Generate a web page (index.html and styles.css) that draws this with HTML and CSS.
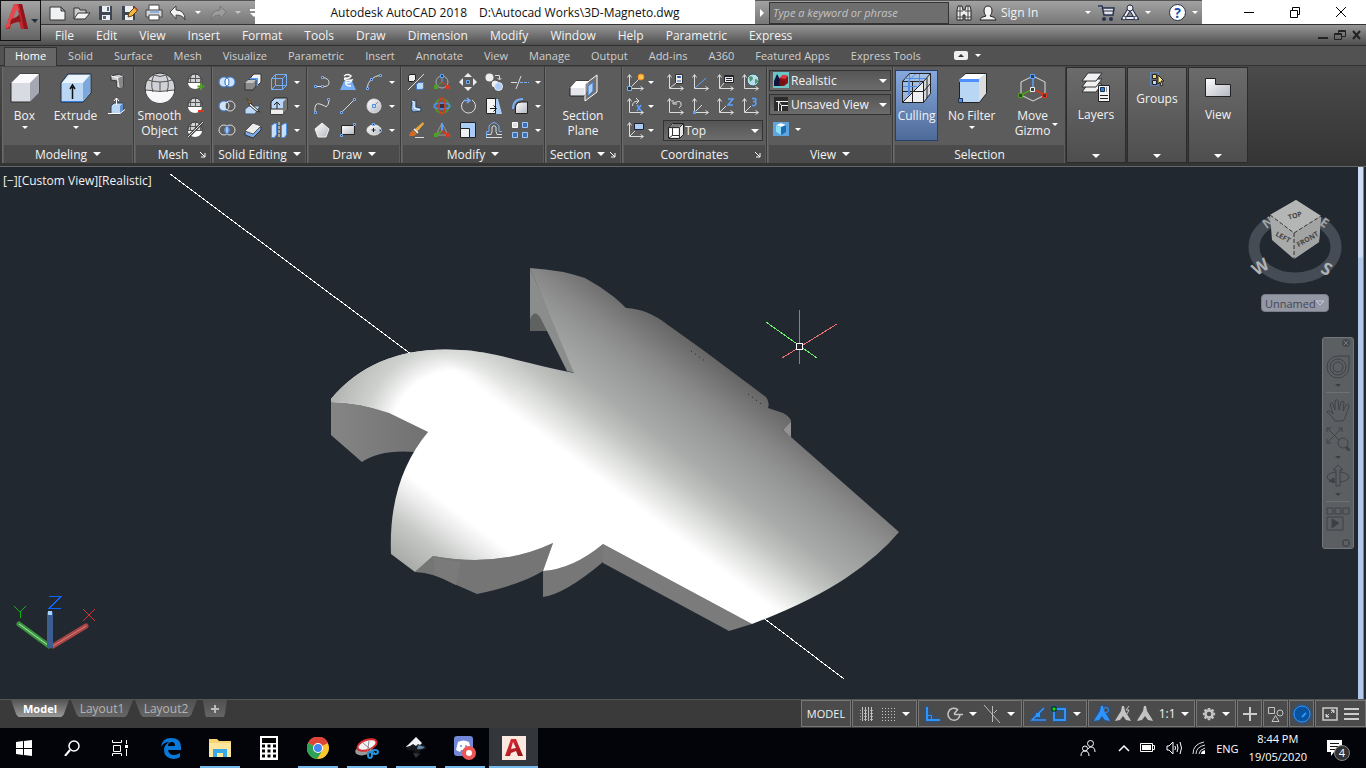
FILE: index.html
```html
<!DOCTYPE html>
<html lang="en">
<head>
  <meta charset="UTF-8" />
  <meta name="viewport" content="width=device-width, initial-scale=1.0" />
  <title>Autodesk AutoCAD 2018</title>
  <link rel="stylesheet" href="styles.css">
</head>
<body>
  <!-- shared icon parts -->
  <svg class="defs" width="0" height="0" aria-hidden="true">
    <defs>
      <linearGradient id="metal" x1="0" y1="0" x2="1" y2="1"><stop offset="0" stop-color="#fff"/><stop offset="1" stop-color="#b4b7c0"/></linearGradient>
      <linearGradient id="red" x1="0" y1="0" x2="1" y2="1"><stop offset="0" stop-color="#e8323a"/><stop offset="1" stop-color="#8f1016"/></linearGradient>
      <symbol id="axis" viewBox="0 0 18 18"><path d="M2.500 2v13.500H16M.5 4.500l2-3 2 3M13.500 13.500l3 2-3 2" fill="none" stroke="#dcdcdc"/></symbol>
      <symbol id="globe" viewBox="0 0 18 18"><circle cx="8" cy="8" r="7" fill="#d0d2d6" stroke="#333"/><path d="M1 9h14v1a7 6 0 0 1-14 0z" fill="#fff"/><path d="M1 9.500h14M2 5.500h12M8.500 1v8M4.500 2q-2 3-1 7M12.500 2q2 3 1 7" fill="none" stroke="#555"/></symbol>
      <symbol id="cube" viewBox="0 0 32 32"><path d="M2 11l9-9h19v19l-9 9H2z" fill="#d9dbe2" stroke="#2e2e2e"/><path d="M2 11l9-9h19l-9 9z" fill="#fafafc"/><path d="M21 11l9-9v19l-9 9z" fill="#a5a8b2"/></symbol>
      <symbol id="person" viewBox="0 0 16 16"><path d="M7 0h2l1 5 5 8 1 2-5-1-3-4-3 4-5 1 1-2 5-8z"/></symbol>
    </defs>
  </svg>

  <div class="app">
    <header class="titlebar">
      <button class="app-menu" aria-label="Application menu">
        <svg width="39" height="39" viewBox="0 0 39 39"><path d="M4 28L13 3h8l6 25h-7l-2-7-8 2-1 5z" fill="#c4262d"/><path d="M4 28L13 3h3l2 6-8 10-1 6z" fill="#e5484d"/><path d="M10 19q6-2 8-6l2 8q-5-2-11 3zM18 3h3l6 25h-4z" fill="#8d171c"/><path d="M12 17l4-9 2 5q-1 3-6 4z" fill="#8c8c8c"/><path d="M30 18h7l-3 4z" fill="#26313c"/></svg>
      </button>
      <div class="quick-access">
        <button aria-label="New"><svg width="18" height="18" viewBox="0 0 18 18"><path d="M1 3h11l4 4v9H1z" fill="#f1f2f4" stroke="#333"/><path d="M12 3v4h4z" fill="#aaa" stroke="#333"/></svg></button>
        <button aria-label="Open"><svg width="18" height="18" viewBox="0 0 18 18"><path d="M1 15V4h5l1 2h6v3" fill="#ccc" stroke="#333"/><path d="M1 15l4-6h12l-5 6z" fill="#f3f3f3" stroke="#333"/></svg></button>
        <button aria-label="Save"><svg width="18" height="18" viewBox="0 0 18 18"><path d="M2 2h13v14H2z" fill="#3c4553"/><path d="M5 2h8v6H5zM5 11h8v5H5z" fill="#eceef0"/><path d="M10 3h2v4h-2zM6 12h3v3H6z" fill="#56657a"/></svg></button>
        <button aria-label="Save As"><svg width="18" height="18" viewBox="0 0 18 18"><path d="M1 2h13v14H1z" fill="#3c4553"/><path d="M4 2h8v6H4zM4 11h8v5H4z" fill="#eceef0"/><path d="M7 13l1-4 6-6 3 3-6 6z" fill="#f4b63c" stroke="#5d4216"/><path d="M14 3l3 3-1 1-3-3z" fill="#c54a2c"/></svg></button>
        <button aria-label="Plot"><svg width="18" height="18" viewBox="0 0 18 18"><path d="M4 1h10v6H4z" fill="#fff" stroke="#444"/><path d="M1 6h16v7H1z" fill="#d3d5da" stroke="#444"/><path d="M4 11h10v5H4z" fill="#fff" stroke="#444"/><path d="M5 8h9" stroke="#4d8fe0"/></svg></button>
        <button aria-label="Undo"><svg width="18" height="18" viewBox="0 0 18 18"><path d="M1 8l6-6v4q9 0 9 10-2-5-9-5v4z" fill="#f4f4f4" stroke="#444"/></svg></button>
        <i class="caret small"></i>
        <button aria-label="Redo"><svg width="18" height="18" viewBox="0 0 18 18"><path d="M17 8l-6-6v4q-9 0-9 10 2-5 9-5v4z" fill="#9c9c9c" stroke="#777"/></svg></button>
        <i class="caret small dim"></i>
        <button class="more" aria-label="Customize"><svg width="10" height="10" viewBox="0 0 10 10"><path d="M1 1h8v2H1zM1 5h8L5 9z" fill="#fff"/></svg></button>
      </div>
      <h1 class="title"><span>Autodesk AutoCAD 2018</span><span>D:\Autocad Works\3D-Magneto.dwg</span></h1>
      <div class="info-center">
        <button class="expander" aria-label="Toggle search"><i class="caret side"></i></button>
        <input type="text" placeholder="Type a keyword or phrase" aria-label="Search">
        <button aria-label="Find"><svg width="18" height="18" viewBox="0 0 18 18"><path d="M2 6l1-4h4l1 4h2l1-4h4l1 4v10h-6v-5H8v5H2z" fill="#eee" stroke="#222"/><path d="M2 7h6M10 7h6M2 13h6M10 13h6M5 2v14M13 2v14" stroke="#444"/></svg></button>
        <button class="sign-in"><svg width="18" height="18" viewBox="0 0 18 18"><path d="M1 16q0-3 6-4-2-2-2-5 0-5 4-5t4 5q0 3-2 5 6 1 6 4z" fill="#f4f4f4" stroke="#222"/></svg>Sign In</button>
        <i class="caret small"></i>
        <button aria-label="App Store"><svg width="18" height="18" viewBox="0 0 18 18"><path d="M1 2h4l2 9h9l1-7H5" fill="#e4e4e8" stroke="#26304e" stroke-width="1.500"/><path d="M6 7h10" stroke="#26304e"/><circle cx="7" cy="15" r="2" fill="#26304e"/><circle cx="14" cy="15" r="2" fill="#26304e"/></svg></button>
        <button aria-label="Stay connected"><svg width="18" height="18" viewBox="0 0 18 18"><path d="M9 4L3 14h12z" fill="none" stroke="#26304e" stroke-width="4"/><path d="M9 4L3 14h12z" fill="none" stroke="#eee" stroke-width="2"/><g fill="#eee" stroke="#26304e"><circle cx="9" cy="4" r="3"/><circle cx="3" cy="14" r="2"/><circle cx="15" cy="14" r="2"/></g></svg></button>
        <i class="caret small"></i>
        <button class="help" aria-label="Help">?</button>
        <i class="caret small"></i>
      </div>
      <div class="window-buttons">
        <button aria-label="Minimize"><svg width="11" height="11" viewBox="0 0 11 11"><path d="M0 5h10v1H0z"/></svg></button>
        <button aria-label="Restore"><svg width="11" height="11" viewBox="0 0 11 11"><path d="M.5 3.500h7v7h-7zM2.500 3V.5h7v7H8" fill="none" stroke="#000"/></svg></button>
        <button aria-label="Close"><svg width="11" height="11" viewBox="0 0 11 11"><path d="M0 0l10 10M10 0L0 10" stroke="#000"/></svg></button>
      </div>
    </header>

    <nav class="menubar">
      <a href="#">File</a><a href="#">Edit</a><a href="#">View</a><a href="#">Insert</a><a href="#">Format</a><a href="#">Tools</a><a href="#">Draw</a><a href="#">Dimension</a><a href="#">Modify</a><a href="#">Window</a><a href="#">Help</a><a href="#">Parametric</a><a href="#">Express</a>
      <div class="doc-buttons">
        <button aria-label="Minimize drawing"><svg width="12" height="12" viewBox="0 0 12 12"><path d="M1 8h10v2H1z" fill="#222"/></svg></button>
        <button aria-label="Restore drawing"><svg width="12" height="12" viewBox="0 0 12 12"><path d="M.5 4.500h7v6h-7zM1 5.500h6M4.500 4V1.500h7v6H8M5 2.500h6" fill="none" stroke="#222"/></svg></button>
        <button aria-label="Close drawing"><svg width="12" height="12" viewBox="0 0 12 12"><path d="M2 2l7 8M9 2l-7 8" stroke="#222" stroke-width="2"/></svg></button>
      </div>
    </nav>

    <nav class="tabs">
      <a href="#" class="active">Home</a><a href="#">Solid</a><a href="#">Surface</a><a href="#">Mesh</a><a href="#">Visualize</a><a href="#">Parametric</a><a href="#">Insert</a><a href="#">Annotate</a><a href="#">View</a><a href="#">Manage</a><a href="#">Output</a><a href="#">Add-ins</a><a href="#">A360</a><a href="#">Featured Apps</a><a href="#">Express Tools</a>
      <button class="ribbon-toggle" aria-label="Minimize ribbon"><svg width="14" height="9" viewBox="0 0 14 9"><rect width="14" height="9" rx="2" fill="#eee"/><path d="M4 6h6L7 3z" fill="#333"/></svg></button>
      <i class="caret small"></i>
    </nav>

    <div class="ribbon">
      <section class="panel modeling">
        <div class="tools">
          <button class="big"><svg width="32" height="32"><use href="#cube"/></svg>Box<i class="caret small"></i></button>
          <button class="big"><svg width="32" height="32" viewBox="0 0 32 32"><path d="M1 11l7-9h23v19l-8 9H1z" fill="#b9d6f4" stroke="#222d3c"/><path d="M2 11l7-8h21l-7 8z" fill="#eaf4fd"/><path d="M23 11l7-8v18l-7 8z" fill="#7ba9dd"/><path d="M12.500 27V15M10 17l2.500-4 2.500 4" fill="none" stroke="#111" stroke-width="1.500"/><path d="M2 29.500h21" stroke="#2f7de0"/></svg>Extrude<i class="caret small"></i></button>
          <div class="grid">
            <button aria-label="Polysolid"><svg width="18" height="18" viewBox="0 0 18 18"><path d="M3 3l8-2 4 2v11l-3 2-3-2V8L3 7z" fill="#c4c6ca" stroke="#333"/><path d="M3 3l7 2v9M10 5l5-2" fill="none" stroke="#fff"/><path d="M10 5l5-2v11l-3 2z" fill="#888"/></svg></button>
            <button aria-label="Presspull"><svg width="18" height="18" viewBox="0 0 18 18"><path d="M3 9l3-3h9v8l-3 3H3z" fill="#b9d6f4" stroke="#345"/><path d="M12 9l3-3v8l-3 3z" fill="#5f8fce"/><path d="M8.500 8V1M6 4l2.500-3L11 4M0 16.500h12l5-4" fill="none" stroke="#fff"/></svg></button>
          </div>
        </div>
        <h2>Modeling <i class="caret"></i></h2>
      </section>

      <section class="panel mesh">
        <div class="tools">
          <button class="big"><svg width="32" height="32" viewBox="0 0 32 32"><circle cx="16" cy="16" r="15" fill="#d0d2d7" stroke="#333"/><path d="M2 18q14 3 28 0a14 13 0 0 1-28 0z" fill="#f7f7f9"/><path d="M2 18q14 3 28 0M4 8q12 4 24 0M10 3q-4 8-1 17M22 3q4 8 1 17M16 10v10M10 3q6 3 12 0" fill="none" stroke="#555"/></svg>Smooth<br>Object</button>
          <div class="grid">
            <button aria-label="Smooth more"><svg width="18" height="18" viewBox="0 0 18 18"><use href="#globe"/><path d="M14 10v7M10.500 13.500h7" stroke="#4da020" stroke-width="2"/></svg></button>
            <button aria-label="Smooth less"><svg width="18" height="18" viewBox="0 0 18 18"><use href="#globe"/><path d="M11 14h6" stroke="#e0341c" stroke-width="2"/></svg></button>
            <button aria-label="Refine mesh"><svg width="18" height="18" viewBox="0 0 18 18"><use href="#globe"/><path d="M1 16L16 1" stroke="#444" stroke-width="3"/><path d="M1 16L16 1" stroke="#ddd"/></svg></button>
          </div>
        </div>
        <h2>Mesh<svg class="launcher" width="6" height="6" viewBox="0 0 6 6"><path d="M0 0l5 5M5 1v4H1" fill="none" stroke="#fff"/></svg></h2>
      </section>

      <section class="panel solid">
        <div class="tools">
          <div class="grid cols-3">
            <button aria-label="Union"><svg width="18" height="18" viewBox="0 0 18 18"><circle cx="6" cy="9" r="5" fill="#cfe2f8" stroke="#3b7bd0"/><circle cx="12" cy="9" r="5" fill="#cfe2f8" stroke="#3b7bd0"/><ellipse cx="9" cy="9" rx="2" ry="4" fill="#fff" stroke="#3b7bd0"/></svg></button>
            <button aria-label="Extrude faces"><svg width="18" height="18" viewBox="0 0 18 18"><path d="M7 4l3-3h7v8l-3 3H7z" fill="#f2f2f4" stroke="#333"/><path d="M6 6h7v7" fill="none" stroke="#5ba0ff" stroke-width="2"/><path d="M1 10l3-3h8v6l-3 4H1z" fill="#8a8a8a" stroke="#333"/><path d="M1 10l3-3h8l-3 3z" fill="#c4c4c4"/></svg></button>
            <button aria-label="Extract edges"><svg width="18" height="18" viewBox="0 0 18 18"><path d="M1.500 5.500h11v11h-11zM5.500 1.500h11v11h-11zM1.500 5.500l4-4M12.500 5.500l4-4M12.500 16.500l4-4M1.500 16.500l4-4" fill="none" stroke="#76aff8"/></svg></button><i class="caret small"></i>
            <button aria-label="Subtract"><svg width="18" height="18" viewBox="0 0 18 18"><circle cx="12" cy="9" r="5" fill="none" stroke="#ddd"/><circle cx="6" cy="9" r="5" fill="#cfe2f8" stroke="#3b7bd0"/><path d="M9 5a5 5 0 0 0 0 8 5 5 0 0 0 0-8" fill="#555" stroke="#ddd"/></svg></button>
            <button aria-label="Slice"><svg width="18" height="18" viewBox="0 0 18 18"><path d="M1 12l4-3h11l-5 8H1z" fill="#bcd8f5" stroke="#456"/><path d="M2 1l6 5-2 2z" fill="#b8752c" stroke="#543"/><path d="M6 6l10 9-4-1-7-6z" fill="#eee" stroke="#333"/></svg></button>
            <button aria-label="Fillet edge"><svg width="18" height="18" viewBox="0 0 18 18"><path d="M1 5l4-4h12v12l-4 4H1z" fill="#b9d6f4" stroke="#222"/><path d="M1 12h12v5H1z" fill="#eee"/><path d="M13 5l4-4v12l-4 4z" fill="#777"/><path d="M7 12V6M4 8l3-3 3 3M1 12h12" fill="none" stroke="#222"/></svg></button><i class="caret small"></i>
            <button aria-label="Intersect"><svg width="18" height="18" viewBox="0 0 18 18"><circle cx="6" cy="9" r="5" fill="none" stroke="#ddd"/><circle cx="12" cy="9" r="5" fill="none" stroke="#ddd"/><ellipse cx="9" cy="9" rx="2" ry="4" fill="#9cc6f8" stroke="#3b7bd0"/></svg></button>
            <button aria-label="Thicken"><svg width="18" height="18" viewBox="0 0 18 18"><path d="M1 11l8-8 8 3v3l-8 8-8-3z" fill="#78abea" stroke="#333"/><path d="M1 10l8-8 8 3-8 8z" fill="#eee" stroke="#555"/></svg></button>
            <button aria-label="Separate"><svg width="18" height="18" viewBox="0 0 18 18"><path d="M1.500 4.500l3-2h2v11l-2 3h-3zM11.500 4.500l3-2h2v11l-2 3h-3z" fill="#c8dffa" stroke="#4c8de0"/><path d="M9 1v16" stroke="#eee" stroke-dasharray="3 1"/></svg></button><i class="caret small"></i>
          </div>
        </div>
        <h2>Solid Editing <i class="caret"></i></h2>
      </section>

      <section class="panel draw">
        <div class="tools">
          <div class="grid cols-3">
            <button aria-label="Polyline"><svg width="18" height="18" viewBox="0 0 18 18"><path d="M2 13.500h9q5 0 5-4t-6-5" fill="none" stroke="#ddd"/><path d="M1.500 12.500h2v2h-2zM8.500 12.500h2v2h-2zM8.500 3.500h2v2h-2z" fill="#234" stroke="#76aff8"/></svg></button>
            <button aria-label="Helix"><svg width="18" height="18" viewBox="0 0 18 18"><path d="M5 8h8l4 9H1z" fill="#76aff8"/><path d="M5 3q4-3 7 0-2 3-6 2-2 3 7 2-2 4-6 2-1 4 5 4" fill="none" stroke="#fff" stroke-width="1.500"/></svg></button>
            <button aria-label="Arc"><svg width="18" height="18" viewBox="0 0 18 18"><path d="M2 16Q3 4 16 2" fill="none" stroke="#ddd"/><path d="M1.500 14.500h2v2h-2zM5.500 5.500h2v2h-2zM14.500 1.500h2v2h-2z" fill="#234" stroke="#76aff8"/></svg></button><i class="caret small"></i>
            <button aria-label="Spline"><svg width="18" height="18" viewBox="0 0 18 18"><path d="M2 15Q1 5 7 7t6 3q3-2 3-7" fill="none" stroke="#ddd"/><path d="M1.500 14.500h2v2h-2zM14.500 1.500h2v2h-2z" fill="#234" stroke="#76aff8"/></svg></button>
            <button aria-label="Line"><svg width="18" height="18" viewBox="0 0 18 18"><path d="M2 16L16 2" stroke="#ddd"/><path d="M1.500 14.500h2v2h-2zM14.500 1.500h2v2h-2z" fill="#234" stroke="#76aff8"/></svg></button>
            <button aria-label="Circle"><svg width="18" height="18" viewBox="0 0 18 18"><circle cx="9" cy="9" r="7" fill="url(#metal)" stroke="#ddd"/><path d="M9 9l4-4" stroke="#888"/><path d="M7.500 7.500h3v3h-3z" fill="#cde" stroke="#4d8fe8"/></svg></button><i class="caret small"></i>
            <button aria-label="Polygon"><svg width="18" height="18" viewBox="0 0 18 18"><path d="M9 2l7 6-3 8H5L2 8z" fill="url(#metal)" stroke="#eee"/></svg></button>
            <button aria-label="Rectangle"><svg width="18" height="18" viewBox="0 0 18 18"><path d="M2.500 4.500h13v9h-13z" fill="url(#metal)" stroke="#222"/><path d="M1.500 13.500h2v2h-2zM14.500 2.500h2v2h-2z" fill="#234" stroke="#76aff8"/></svg></button>
            <button aria-label="Ellipse"><svg width="18" height="18" viewBox="0 0 18 18"><ellipse cx="9" cy="9" rx="7" ry="5" fill="url(#metal)" stroke="#eee"/><path d="M8.500 7v4M6.500 9h4" stroke="#222"/><path d="M7.500 2.500h2v2h-2zM14.500 8.500h2v2h-2z" fill="#234" stroke="#76aff8"/></svg></button><i class="caret small"></i>
          </div>
        </div>
        <h2>Draw <i class="caret"></i></h2>
      </section>

      <section class="panel modify">
        <div class="tools">
          <div class="grid cols-5">
            <button aria-label="3D Align"><svg width="18" height="18" viewBox="0 0 18 18"><path d="M1.500 3.500l1-2h6v5l-2 2h-5z" fill="#eee" stroke="#222"/><path d="M1 17L17 1" stroke="#ddd"/><path d="M9.500 11.500l2-2h5v5l-1 2h-6z" fill="#b9d6f4" stroke="#3b7bd0"/></svg></button>
            <button aria-label="3D Move"><svg width="18" height="18" viewBox="0 0 18 18"><circle cx="9" cy="9" r="6" fill="none" stroke="#aaa"/><path d="M9 9V2" stroke="#5ba0ff"/><path d="M9 9l-6 5" stroke="#4da020"/><path d="M9 9l6 5" stroke="#e0341c"/><path d="M7.500 1.500h3v3h-3z" fill="#245" stroke="#5ba0ff"/><path d="M1 12h4v4H1z" fill="#4da020"/><path d="M13 12h4v4h-4z" fill="#e0341c"/></svg></button>
            <button aria-label="Move"><svg width="18" height="18" viewBox="0 0 18 18"><path d="M9 0l4 4H5zM9 18l4-4H5zM0 9l4-4v8zM18 9l-4-4v8z" fill="#eee"/><path d="M7.500 7.500h3v3h-3z" fill="#345" stroke="#76aff8"/></svg></button>
            <button aria-label="Copy"><svg width="18" height="18" viewBox="0 0 18 18"><circle cx="4.500" cy="4.500" r="4" fill="#eee"/><circle cx="10" cy="11" r="4" fill="#eee" stroke="#555"/><circle cx="13.500" cy="13.500" r="4" fill="#a9cdf6" stroke="#eee"/><path d="M10 2.500h4.500v4M12.500 5l2 2 2-2" fill="none" stroke="#ddd"/></svg></button>
            <button aria-label="Trim"><svg width="18" height="18" viewBox="0 0 18 18"><path d="M0 9.500h6" stroke="#ddd"/><path d="M9 9.500h9" stroke="#76aff8" stroke-dasharray="3 1"/><path d="M10 3L5 16" stroke="#ddd"/></svg></button><i class="caret small"></i>
            <button aria-label="Extract"><svg width="18" height="18" viewBox="0 0 18 18"><path d="M5 4l4-1v7l5 1v3l-8 1-2-3z" fill="#8fb6e4" stroke="#345"/><path d="M5 4l2 1v6l6 2" fill="none" stroke="#fff"/></svg></button>
            <button aria-label="3D Rotate"><svg width="18" height="18" viewBox="0 0 18 18"><g fill="none" stroke-width="1.500"><circle cx="9" cy="9" r="7" stroke="#4da020"/><ellipse cx="9" cy="9" rx="8" ry="3" stroke="#4d8fe8"/><ellipse cx="9" cy="9" rx="3" ry="8" stroke="#d83a20"/></g><path d="M7 7h4v4H7z" fill="#334"/></svg></button>
            <button aria-label="Rotate"><svg width="18" height="18" viewBox="0 0 18 18"><path d="M6 3a7 7 0 1 0 7 0" fill="none" stroke="#ddd"/><path d="M5 3.500h6M8 1l3 2.500L8 6" fill="none" stroke="#76aff8" stroke-width="1.500"/></svg></button>
            <button aria-label="Mirror"><svg width="18" height="18" viewBox="0 0 18 18"><path d="M1.500 1.500h9v15h-9z" fill="#f4f4f4" stroke="#222"/><path d="M11 2h2l4 15h-6z" fill="#a9cdf6"/><path d="M5 11.500h6M8.500 8.500l3 3-3 3" fill="none" stroke="#111"/></svg></button>
            <button aria-label="Fillet"><svg width="18" height="18" viewBox="0 0 18 18"><path d="M4.500 16.500V11q0-6 6-6h6v11.500z" fill="url(#metal)" stroke="#222"/><path d="M2 12Q2 2 12 2" fill="none" stroke="#76aff8" stroke-width="2"/></svg></button><i class="caret small"></i>
            <button aria-label="Erase"><svg width="18" height="18" viewBox="0 0 18 18"><path d="M8 8l8-7 1 2-7 8z" fill="#e9a840"/><path d="M6 9l4 4-3 2H2q1-4 4-6z" fill="#d06a24"/><path d="M7 8l4 4" stroke="#fff" stroke-width="1.500"/><path d="M8 16.500h9" stroke="#ddd"/></svg></button>
            <button aria-label="3D Scale"><svg width="18" height="18" viewBox="0 0 18 18"><path d="M9 2L3 14h12z" fill="none" stroke="#999"/><path d="M9 10V2" stroke="#5ba0ff" stroke-width="2"/><path d="M9 10l-6 4" stroke="#4da020" stroke-width="2"/><path d="M9 10l6 4" stroke="#e0341c" stroke-width="2"/><path d="M1 12h4v4H1z" fill="#4da020"/><path d="M13 12h4v4h-4z" fill="#e0341c"/></svg></button>
            <button aria-label="Scale"><svg width="18" height="18" viewBox="0 0 18 18"><path d="M1.500 1.500h15v15h-15z" fill="#a9cdf6" stroke="#222"/><path d="M1.500 7.500h9v9h-9z" fill="#f0f0f4" stroke="#222"/></svg></button>
            <button aria-label="Offset"><svg width="18" height="18" viewBox="0 0 18 18"><path d="M1 16.500h16M1 13.500h5l1-3V6q2-3 4 0v4.500l1 3h5" fill="none" stroke="#ddd"/><path d="M1.500 16v-5.500H4V5q5-7 10 0v5.500h3" fill="none" stroke="#76aff8"/></svg></button>
            <button aria-label="Array"><svg width="18" height="18" viewBox="0 0 18 18"><path d="M1.500 1.500h5v5h-5z" fill="#ddd" stroke="#fff"/><path d="M11.500 1.500h5v5h-5zM1.500 11.500h5v5h-5zM11.500 11.500h5v5h-5z" fill="#3f6fb4" stroke="#9cc6f8"/></svg></button><i class="caret small"></i>
          </div>
        </div>
        <h2>Modify <i class="caret"></i></h2>
      </section>

      <section class="panel section-panel">
        <div class="tools">
          <button class="big"><svg width="32" height="32" viewBox="0 0 32 32"><path d="M3 16l6-7h14v8l-6 7H3z" fill="#e4e6ea" stroke="#222"/><path d="M3 16l6-7h13l-5 7z" fill="#fff"/><path d="M18 12L30 3v17L18 29z" fill="#777" fill-opacity=".8" stroke="#fff"/><path d="M21 14l5-4v9l-5 5z" fill="#a9cdf6" stroke="#3b7bd0"/></svg>Section<br>Plane</button>
        </div>
        <h2>Section <i class="caret"></i><svg class="launcher" width="6" height="6" viewBox="0 0 6 6"><path d="M0 0l5 5M5 1v4H1" fill="none" stroke="#fff"/></svg></h2>
      </section>

      <section class="panel coordinates">
        <div class="tools">
          <div class="grid with-caret">
            <button aria-label="Origin"><svg width="18" height="18" viewBox="0 0 18 18"><use href="#axis"/><path d="M3 15l9-9" stroke="#ddd"/><path d="M.5 13.500h4v4h-4z" fill="#234" stroke="#76aff8"/><circle cx="14" cy="4" r="3" fill="#ffc34a" stroke="#e8891c"/></svg></button><i class="caret small"></i>
            <button aria-label="Rotate X"><svg width="18" height="18" viewBox="0 0 18 18"><use href="#axis"/><path d="M5.500 9q0-5 6-5M9 1l3 3-3 3" fill="none" stroke="#ddd"/><path d="M10 8l4 6M14 8l-4 6" stroke="#5ba0ff" stroke-width="1.500"/></svg></button><i class="caret small"></i>
            <button aria-label="UCS view"><svg width="18" height="18" viewBox="0 0 18 18"><use href="#axis"/><path d="M7.500 2.500h9v6h-9z" fill="#a9cdf6" stroke="#223"/><path d="M3 15l5-5" stroke="#ddd"/></svg></button><i class="caret small"></i>
          </div>
          <div class="stack">
            <div class="grid cols-4">
              <button aria-label="UCS icon"><svg width="18" height="18" viewBox="0 0 18 18"><use href="#axis"/><path d="M8.500 1.500h7v9h-7z" fill="#eee" stroke="#333"/><path d="M10.500 3.500h3v1h-3zM10 8h4" stroke="#35a" fill="#35a"/><path d="M3 15l6-5" stroke="#ddd"/></svg></button>
              <button aria-label="UCS"><svg width="18" height="18" viewBox="0 0 18 18"><use href="#axis"/><path d="M3 15L14 5" stroke="#5ba0ff"/></svg></button>
              <button aria-label="Named UCS"><svg width="18" height="18" viewBox="0 0 18 18"><use href="#axis"/><path d="M7.500 2.500h9v7h-9z" fill="#eee" stroke="#222"/><path d="M7 3.500h10M9 5.500h6M9 7.500h6" stroke="#223"/><path d="M3 15l4-5" stroke="#ddd"/></svg></button>
              <button aria-label="World"><svg width="18" height="18" viewBox="0 0 18 18"><use href="#axis"/><circle cx="11" cy="7" r="6" fill="#b7dced" stroke="#355"/><path d="M7 4q4-2 4 2l-3 3zM13 6q3 0 3 3l-3 2z" fill="#4a9a63"/></svg></button>
              <button aria-label="Previous"><svg width="18" height="18" viewBox="0 0 18 18"><use href="#axis"/><path d="M12 11q3-2 2-5t-7 0M6 3v4h4" fill="none" stroke="#ddd"/></svg></button>
              <button aria-label="Origin point"><svg width="18" height="18" viewBox="0 0 18 18"><use href="#axis"/><path d="M3 15l7-7" stroke="#ddd"/><path d="M1 14h3v3H1z" fill="#5ba0ff"/></svg></button>
              <button aria-label="Z-axis"><svg width="18" height="18" viewBox="0 0 18 18"><use href="#axis"/><path d="M3 15l6-6" stroke="#ddd"/><path d="M11 2h5l-5 6h5" fill="none" stroke="#5ba0ff" stroke-width="1.500"/></svg></button>
              <button aria-label="3 point"><svg width="18" height="18" viewBox="0 0 18 18"><use href="#axis"/><path d="M3 15l6-6" stroke="#ddd"/><path d="M10 1.500h3q2 1 0 3h-2 2q2 1 0 4h-3" fill="none" stroke="#5ba0ff" stroke-width="1.500"/></svg></button>
            </div>
            <div class="combo top">
              <svg width="18" height="18" viewBox="0 0 18 18"><path d="M1.500 5.500l4-4h11v11l-4 4h-11z" fill="#e6e6e6" stroke="#222"/><path d="M2 5l4-3h10l-4 3z" fill="#777"/><path d="M3 7h8v8H3z" fill="#fff"/><path d="M1.500 5.500h11v11M12.500 5.500l4-4M5.500 6v7.500H12M2 16l4-3" fill="none" stroke="#333"/></svg>
              <select aria-label="UCS"><option>Top</option></select>
            </div>
          </div>
        </div>
        <h2>Coordinates<svg class="launcher" width="6" height="6" viewBox="0 0 6 6"><path d="M0 0l5 5M5 1v4H1" fill="none" stroke="#fff"/></svg></h2>
      </section>

      <section class="panel view">
        <div class="tools stack">
          <div class="combo">
            <svg width="16" height="16" viewBox="0 0 16 16"><path d="M0 0h16v16H0z" fill="#6cc6c8"/><path d="M1 14V9l3-7 4 7v5z" fill="#10153c"/><path d="M7 6l3-3 5 1v7l-4 3-4-2z" fill="#8f1016"/><path d="M7 6l3-3 5 1-3 3z" fill="#e8323a"/><circle cx="9" cy="11" r="3" fill="#711"/></svg>
            <select aria-label="Visual style"><option>Realistic</option></select>
          </div>
          <div class="combo">
            <svg width="16" height="16" viewBox="0 0 16 16"><path d="M1 1h14v14H1z" fill="#2b2b2b"/><path d="M3 5.500h12M5.500 5v10M8.500 15V9.500H15M8.500 9.500l-3-4" fill="none" stroke="#eee"/></svg>
            <select aria-label="View"><option>Unsaved View</option></select>
          </div>
          <button class="projection" aria-label="Projection"><svg width="16" height="14" viewBox="0 0 16 14"><path d="M0 0h16v14H0z" fill="#5fa4dd"/><path d="M3 3l5-2 5 2v7l-5 3-5-3z" fill="#1a6fb4"/><path d="M3 3l5-2 5 2-5 2z" fill="#fff"/><path d="M3 3l5 2v8l-5-3z" fill="#8fdcf6"/></svg><i class="caret small"></i></button>
        </div>
        <h2>View <i class="caret"></i></h2>
      </section>

      <section class="panel selection">
        <div class="tools">
          <button class="big on"><svg width="32" height="32" viewBox="0 0 32 32"><path d="M1.500 9.500l7-8h21v20l-7 9h-21z" fill="#c9daf0" fill-opacity=".5"/><path d="M1.500 30.500l21-21v21z" fill="#eceef2"/><path d="M22.500 9.500l7-8v20l-7 9z" fill="#d3d5da"/><path d="M1.500 9.500h21v21h-21zM1.500 9.500l7-8h21v20l-7 9M22.500 9.500l7-8M11.500 9v21M1.500 19.500h21l7-8M1.500 30.500l21-21M26 6v20" fill="none" stroke="#222"/><path d="M4 6.500h21M8.500 2v20M2 14.500h14M18.500 2v10M14.500 2l-7 7v14" fill="none" stroke="#4d8fe8"/></svg>Culling</button>
          <button class="big"><svg width="32" height="32" viewBox="0 0 32 32"><path d="M3.500 8.500l6-7h21v20l-7 9h-20z" fill="#b9d6f4" stroke="#222"/><path d="M4 7l6-5h19l-6 5z" fill="#fff"/><path d="M23 8l7-6v19l-7 8z" fill="#ddd"/><path d="M3 7h20v3H3z" fill="#4d8fff"/><path d="M2.500 26.500h4v4h-4z" fill="#4d8fff" stroke="#234"/></svg>No Filter<i class="caret small"></i></button>
          <button class="big gizmo"><svg width="32" height="32" viewBox="0 0 32 32"><path d="M16 4L4 10v13l12 6 12-6V10z" fill="none" stroke="#ddd"/><path d="M16 17V4" stroke="#5ba0ff" stroke-width="1.500"/><path d="M16 17L4 23" stroke="#4da020" stroke-width="1.500"/><path d="M16 17l12 6" stroke="#e0341c" stroke-width="1.500"/><g fill="#3c3c3c"><path d="M13.500 2.500h4v4h-4z" stroke="#5ba0ff"/><path d="M1.500 21.500h4v4h-4z" stroke="#4da020"/><path d="M25.500 21.500h4v4h-4z" stroke="#e0341c"/><path d="M13.500 15.500h4v4h-4z" stroke="#eee"/></g></svg>Move<br>Gizmo<i class="caret small"></i></button>
        </div>
        <h2>Selection</h2>
      </section>

      <button class="collapsed"><svg width="32" height="32" viewBox="0 0 32 32"><g fill="#f1f1f3" stroke="#333"><path d="M2 21l6-8h14l-6 8z"/><path d="M2 16l6-8h14l-6 8z"/><path d="M2 10l6-8h14l-6 8z"/></g><path d="M18.500 14.500h11v16h-11z" fill="#f1f1f3" stroke="#222"/><path d="M20.500 16.500h4v4h-4z" fill="#3b7bd0" stroke="#135"/><path d="M26.500 16v5" stroke="#888"/><path d="M20 24.500h8M20 27.500h8" stroke="#222"/></svg>Layers<i class="caret"></i></button>
      <button class="collapsed"><svg width="16" height="16" viewBox="0 0 16 16"><path d="M1.500 1.500h8v13h-8z" fill="none" stroke="#5ba0ff" stroke-dasharray="1 1"/><path d="M3.500 3.500h4v4h-4z" fill="#f7d774" stroke="#222"/><path d="M3.500 9.500h4v4h-4z" fill="#bcd8f5" stroke="#222"/><path d="M9 4l6 6h-3l2 4-2 1-1-4-2 2z" fill="#ffe98a" stroke="#222"/></svg>Groups<i class="caret"></i></button>
      <button class="collapsed"><svg width="32" height="32" viewBox="0 0 32 32"><path d="M3.500 7.500h10v6h15v12h-25z" fill="url(#metal)" stroke="#222"/></svg>View<i class="caret"></i></button>
    </div>

    <main class="viewport">
      <svg class="scene" viewBox="0 167 1366 532" role="img" aria-label="3D model">
        <defs>
          <linearGradient id="surface" gradientUnits="userSpaceOnUse" x1="391" y1="554" x2="601" y2="274">
            <stop offset="0" stop-color="#a9aba9"/><stop offset=".09" stop-color="#c6c8c6"/><stop offset=".16" stop-color="#e9eae9"/><stop offset=".21" stop-color="#fff"/><stop offset=".53" stop-color="#fff"/><stop offset=".6" stop-color="#dfe1de"/><stop offset=".66" stop-color="#c2c4c1"/><stop offset=".73" stop-color="#a9abaa"/><stop offset=".83" stop-color="#969897"/><stop offset=".9" stop-color="#868686"/><stop offset="1" stop-color="#666"/>
          </linearGradient>
          <radialGradient id="lobe" gradientUnits="userSpaceOnUse" cx="455" cy="435" r="128">
            <stop offset=".5" stop-color="#c0c3c0" stop-opacity="0"/><stop offset=".72" stop-color="#c8cbc8" stop-opacity=".9"/><stop offset="1" stop-color="#b0b3b0"/>
          </radialGradient>
          <linearGradient id="side"><stop offset="0" stop-color="#858585"/><stop offset="1" stop-color="#717171"/></linearGradient>
          <linearGradient id="fade" gradientUnits="userSpaceOnUse" x1="440" y1="0" x2="530" y2="0"><stop offset="0" stop-color="#fff"/><stop offset="1" stop-color="#000"/></linearGradient>
          <mask id="lobe-mask" maskUnits="userSpaceOnUse" x="320" y="340" width="210" height="92"><path d="M320 340h210v42l-70 50H320z" fill="url(#fade)"/></mask>
          <path id="body" d="M530 268Q562 270 585 278Q600 286 614 297Q621 303 626 308Q648 309 668 325L703 350L766 397Q770 402 768 408L783 413Q791 417 791 422L783 430L899 532Q880 555 846 578Q810 602 752 624L603 544Q573 569 543 571L553 543Q500 568 433 556L415 572L391 554Q388 480 428 432L389 413Q358 402 331 402V399Q376 345 460 350C490 351 520 362 574 373z"/>
        </defs>
        <path d="M170 174L411 354M765 619L844 679" stroke="#fff" shape-rendering="crispEdges"/>
        <path d="M530 268V331H547L567 371L575 373z" fill="#8b8c8c"/>
        <path d="M530 331V319Q535 308 541 319L547 331z" fill="#606161"/>
        <path d="M331 401Q362 402 389 413L428 432L416 452Q380 449 362 462L331 435z" fill="url(#side)"/>
        <path d="M415 572L433 556Q500 568 553 543L543 571Q520 585 477 594L452 583Q434 573 415 572z" fill="#757575"/>
        <path d="M433 556Q450 562 461 561L456 585L435 575z" fill="#7a7a7a"/>
        <path d="M543 571Q573 569 603 544V562Q565 594 543 597z" fill="#777"/>
        <path d="M603 544L752 624L729 631L603 563z" fill="#7b7b7b"/>
        <path d="M791 420V438L783 430z" fill="#929292"/>
        <use href="#body" fill="url(#surface)"/>
        <use href="#body" fill="url(#lobe)" mask="url(#lobe-mask)"/>
        <path d="M691 351l14 10M748 394l16 12" stroke="#222" stroke-dasharray="1 4"/>
        <g fill="none" shape-rendering="crispEdges">
          <path d="M799 310v54" stroke="#7a76ea"/>
          <path d="M766 322l51 36" stroke="#6df06d"/>
          <path d="M837 324l-55 34" stroke="#f07070"/>
          <path d="M796.500 343.500h6v6h-6z" fill="#222831" stroke="#fff"/>
        </g>
        <g fill="none">
          <path d="M19 624l30 22" stroke="#3c9440" stroke-width="5" stroke-linecap="round"/>
          <path d="M19 624l30 22" stroke="#a8eeaa" stroke-width="1"/>
          <path d="M86 626l-33 20" stroke="#a84646" stroke-width="5" stroke-linecap="round"/>
          <path d="M86 626l-33 20" stroke="#d88080" stroke-width="1"/>
          <path d="M50 612v36" stroke="#3c5d90" stroke-width="6"/>
          <path d="M48 611h4v4h-4z" fill="#a8d4ff"/>
          <g shape-rendering="crispEdges">
            <path d="M49 596.500h12l-12 12h12" stroke="#0a68ff"/>
            <path d="M14 606l6 6 6-6M20.500 612v6" stroke="#12b012"/>
            <path d="M83 609l12 12M95 609l-12 12" stroke="#d83030"/>
          </g>
        </g>
      </svg>

      <div class="view-label">[−][Custom View][Realistic]</div>

      <div class="view-cube">
        <svg width="96" height="90" viewBox="1247 197 96 90">
          <ellipse cx="1295" cy="247" rx="41" ry="31" fill="none" stroke="#454c55" stroke-width="11"/>
          <g class="compass"><text x="1263" y="227" transform="rotate(-35 1268 223)">N</text><text x="1321" y="228" transform="rotate(35 1326 223)">E</text></g>
          <path d="M1296 200l25 16-2 26-25 17-22-19-2-25z" fill="#a8a9a9"/>
          <path d="M1296 200l25 16-27 17-24-18z" fill="#b4b5b5"/>
          <path d="M1294 233l27-17-2 26-25 17z" fill="#a2a3a3"/>
          <path d="M1270 215l24 18 27-17M1294 233v26" fill="none" stroke="#333" stroke-dasharray="4 2"/>
          <g class="faces"><text x="1288" y="218" transform="rotate(-15 1295 216)">TOP</text><text x="1275" y="239" transform="rotate(28 1282 237)">LEFT</text><text x="1296" y="242" transform="rotate(-30 1307 240)">FRONT</text></g>
          <g class="compass large"><text x="1252" y="273" transform="rotate(-32 1260 267)">W</text><text x="1322" y="275" transform="rotate(28 1327 269)">S</text></g>
        </svg>
        <div class="ucs-name"><select aria-label="UCS name"><option>Unnamed</option></select><svg width="10" height="6" viewBox="0 0 10 6"><path d="M1 1h8L5 5z" fill="none" stroke="#c6c8d2"/></svg></div>
      </div>

      <div class="navbar">
        <svg class="dot" width="8" height="8" viewBox="0 0 8 8"><circle cx="4" cy="4" r="4" fill="#45494d"/><path d="M2 2l4 4M6 2L2 6" stroke="#777b7e"/></svg>
        <button class="wheel" aria-label="Steering wheel"><svg width="24" height="24" viewBox="0 0 24 24"><path d="M12 1h11v11a11 11 0 1 1-11-11z"/><circle cx="12" cy="12" r="8"/><circle cx="12" cy="12" r="5"/><path d="M6 18l2-2M18 18l-2-2"/></svg></button>
        <i class="caret small"></i>
        <hr>
        <button aria-label="Pan"><svg width="24" height="24" viewBox="0 0 24 24"><path d="M9 23q-3-5-8-9 1-3 6 2L4 6q1-3 3 0l2 6V3q2-3 3 0l1 9 2-8q2-2 3 0l-1 9 3-6q3-2 3 1l-3 9q-1 4-3 6z"/></svg></button>
        <button aria-label="Zoom"><svg width="24" height="24" viewBox="0 0 24 24"><path d="M1 1l15 15M16 1L1 16M1 5V1h4M12 1h4v4M1 12v4h4"/><circle cx="17" cy="16" r="5" fill="#5b5f62"/><path d="M20 20l4 4" stroke-width="3"/></svg></button>
        <i class="caret small"></i>
        <button aria-label="Orbit"><svg width="24" height="24" viewBox="0 0 24 24"><ellipse cx="12" cy="13" rx="11" ry="5"/><path d="M10 22V6H7l5-5 5 5h-3v16z" fill="#5b5f62"/><path d="M3 17l5-3v5z" fill="#3c4044"/></svg></button>
        <i class="caret small"></i>
        <hr>
        <button aria-label="ShowMotion"><svg width="24" height="24" viewBox="0 0 24 24"><path d="M1 1h6v6H1zM9 1h6v6H9zM17 1h6v6h-6zM1 10h16v13H1z"/><path d="M6 12l7 4-7 5z" fill="#3c4044"/></svg></button>
        <svg class="dot" width="8" height="8" viewBox="0 0 8 8"><circle cx="4" cy="4" r="4" fill="#45494d"/><path d="M2 3h4M2 5h4" stroke="#777b7e"/></svg>
      </div>
      <div class="edge"></div>
    </main>

    <footer class="statusbar">
      <div class="layouts">
        <button class="active">Model</button><button>Layout1</button><button>Layout2</button><button class="add" aria-label="New layout"><svg width="8" height="8" viewBox="0 0 8 8"><path d="M3 0h2v3h3v2H5v3H3V5H0V3h3z" fill="#bbb"/></svg></button>
      </div>
      <div class="status">
        <div class="group model"><button>MODEL</button></div>
        <div class="group grid-group">
          <button aria-label="Grid"><svg width="16" height="16" viewBox="0 0 16 16"><path d="M3.500 1v14M6.500 1v14M9.500 1v14M12.500 1v14" stroke="#c4c4c4"/><path d="M1 4.500h14M1 7.500h14M1 10.500h14M1 13.500h14" stroke="#aaa" stroke-dasharray="1 1"/></svg></button>
          <button aria-label="Snap"><svg width="16" height="16" viewBox="0 0 16 16"><path d="M1 2.500h14M1 5.500h14M1 8.500h14M1 11.500h14M1 14.500h14" stroke="#c4c4c4" stroke-dasharray="1 2"/></svg></button>
          <i class="caret"></i>
        </div>
        <div class="group polar-group">
          <button class="lit" aria-label="Ortho"><svg width="16" height="16" viewBox="0 0 16 16"><path d="M2 1v13h13" fill="none" stroke="currentColor" stroke-width="2"/><path d="M3 9.500h3.500V13" fill="none" stroke="currentColor"/></svg></button>
          <button aria-label="Polar"><svg width="16" height="16" viewBox="0 0 16 16"><path d="M13 8a6 6 0 1 1-3-5M7 8.500h9M7 8l4-5" fill="none" stroke="#c4c4c4" stroke-width="1.500"/></svg></button>
          <i class="caret"></i>
          <button aria-label="Isodraft"><svg width="18" height="20" viewBox="0 0 18 20"><path d="M1 1l16 18M9.500 2v16M14 6l-3 3" fill="none" stroke="#bbb"/></svg></button>
          <i class="caret"></i>
        </div>
        <div class="group snap-group">
          <button class="lit" aria-label="Object snap tracking"><svg width="16" height="16" viewBox="0 0 16 16"><path d="M14 2L2 14h14" fill="none" stroke="currentColor" stroke-width="1.500"/><path d="M6 7h4v4H6z" fill="currentColor"/></svg></button>
          <button class="lit" aria-label="Object snap"><svg width="16" height="16" viewBox="0 0 16 16"><path d="M3 3h11v11H3z" fill="none" stroke="currentColor" stroke-width="2"/><path d="M1 1h4v4H1z" fill="#18d818" stroke="#020"/></svg></button>
          <i class="caret"></i>
        </div>
        <div class="group scale-group">
          <button class="lit" aria-label="Annotation visibility"><svg width="16" height="16" fill="currentColor"><use href="#person"/><circle cx="12" cy="4" r="2.500" fill="#4b4b4b" stroke="currentColor"/></svg></button>
          <button aria-label="Auto scale"><svg width="16" height="16" fill="#c4c4c4"><use href="#person"/><path d="M14 0l-3 4h3l-2 4" fill="none" stroke="#c4c4c4"/></svg></button>
          <button class="scale"><svg width="16" height="16" fill="#c4c4c4"><use href="#person"/></svg>1:1</button>
          <i class="caret"></i>
        </div>
        <div class="group gear-group">
          <button aria-label="Workspace"><svg width="14" height="14" viewBox="0 0 16 16"><circle cx="8" cy="8" r="4" fill="none" stroke="#c4c4c4" stroke-width="3"/><path d="M8 1v2M8 13v2M1 8h2M13 8h2M3 3l2 2M11 11l2 2M13 3l-2 2M5 11l-2 2" stroke="#c4c4c4" stroke-width="3"/></svg></button>
          <i class="caret"></i>
        </div>
        <div class="group one"><button aria-label="Annotation monitor"><svg width="14" height="14" viewBox="0 0 14 14"><path d="M7 0v14M0 7h14" stroke="#ccc" stroke-width="2"/></svg></button></div>
        <div class="group one"><button aria-label="Isolate"><svg width="16" height="16" viewBox="0 0 16 16"><path d="M.5 1.500h6v6h-6zM4 15.500l3.500-6 3.500 6z" fill="none" stroke="#c4c4c4"/><circle cx="12" cy="7" r="3" fill="none" stroke="#c4c4c4"/></svg></button></div>
        <div class="group one"><button class="lit" aria-label="Hardware acceleration"><svg width="18" height="18" viewBox="0 0 18 18"><circle cx="9" cy="9" r="8" fill="#07539e" stroke="currentColor"/><path d="M9 12l4-4" stroke="currentColor" stroke-width="2"/></svg></button></div>
        <div class="group last">
          <button aria-label="Clean screen"><svg width="16" height="14" viewBox="0 0 16 14"><path d="M1 1h14v12H1z" fill="none" stroke="#ccc" stroke-width="1.500"/><path d="M4 10l3-3M4 7v3h3zM9 6l3-3M9 3h3v3z" fill="#ccc" stroke="#ccc"/></svg></button>
          <button aria-label="Customization"><svg width="15" height="14" viewBox="0 0 15 14"><path d="M0 2h15M0 7h15M0 12h15" stroke="#ccc" stroke-width="2"/></svg></button>
        </div>
      </div>
    </footer>

    <div class="taskbar">
      <div class="launch">
        <button aria-label="Start"><svg width="16" height="16" viewBox="0 0 16 16"><path d="M0 2l7-1v7H0zM8 1l8-1v8H8zM0 9h7v6l-7-1zM8 9h8v7l-8-1z" fill="#fff"/></svg></button>
        <button aria-label="Search"><svg width="16" height="16" viewBox="0 0 16 16"><circle cx="10" cy="6" r="5" fill="none" stroke="#fff" stroke-width="1.500"/><path d="M6 10l-5 6" stroke="#fff" stroke-width="2"/></svg></button>
        <button aria-label="Task view"><svg width="16" height="16" viewBox="0 0 16 16"><path d="M.5 0v2.500h9V0M1.500 5.500h7v6h-7zM.5 16v-2.500h9V16M14.500 0v4M14.500 9v7" fill="none" stroke="#fff"/><path d="M13 5h3v3h-3z" fill="#fff"/></svg></button>
      </div>
      <div class="apps">
        <button aria-label="Edge"><svg width="22" height="22" viewBox="0 0 22 22"><path d="M1 10Q2 1 11 1q10 0 10 9v3H8q1 5 6 5 3 0 6-2v4q-3 2-7 2Q4 21 4 13q0-5 5-8Q4 5 1 10zM8 9h7q0-4-3-4-4 0-4 4z" fill="#0a78d8"/></svg></button>
        <button class="open" aria-label="File Explorer"><svg width="22" height="20" viewBox="0 0 22 20"><path d="M0 1h8l2 2h12v16H0z" fill="#f6d473"/><path d="M0 5h22v14H0z" fill="#fde79c"/><path d="M4 11h14v8h-4v-4H8v4H4z" fill="#37a9e6"/></svg></button>
        <button aria-label="Calculator"><svg width="18" height="24" viewBox="0 0 18 24"><path d="M0 0h18v24H0z" fill="#fff"/><path d="M2 2h14v5H2z"/><path d="M2 10h14M2 15h14M2 20h14" stroke="#000" stroke-width="3" stroke-dasharray="3 2.500"/></svg></button>
        <button class="open" aria-label="Chrome"><svg width="22" height="22" viewBox="0 0 22 22"><circle cx="11" cy="11" r="11" fill="#fbc831"/><path d="M11 11L1 6a11 11 0 0 1 20 0z" fill="#de4538"/><path d="M11 11L1 6a11 11 0 0 0 9 16l5-8z" fill="#2da156"/><circle cx="11" cy="11" r="5" fill="#fff"/><circle cx="11" cy="11" r="4" fill="#4387f5"/></svg></button>
        <button class="open" aria-label="Snipping Tool"><svg width="24" height="22" viewBox="0 0 24 22"><ellipse cx="9" cy="13" rx="9" ry="5" fill="#999" transform="rotate(-15 9 13)"/><ellipse cx="12" cy="8" rx="10" ry="5" fill="#f4f4f6" stroke="#d82c30" stroke-width="2" transform="rotate(-20 12 8)"/><path d="M8 6l12 10M14 4l-2 14" stroke="#888"/><g fill="none" stroke="#2492d8" stroke-width="2"><ellipse cx="20" cy="15" rx="3" ry="2"/><ellipse cx="15" cy="18" rx="2" ry="3"/></g></svg></button>
        <button class="open" aria-label="Inkscape"><svg width="22" height="22" viewBox="0 0 22 22"><path d="M11 0l10 10q1 3-4 3l-3 2 2 2-5 4-3-4 2-3-7-1q-3-1-1-3z" fill="#15171b"/><path d="M11 0l6 6-2 2-2-1-2 2-3-2-3 2-4 1q0-1 2-2z" fill="#f1f4f8"/><path d="M13 8l7 2q-3 3-8 2z" fill="#6085a9"/><path d="M8 16l6 1-3 4z" fill="#333"/></svg></button>
        <button class="open" aria-label="Discord"><svg width="22" height="24" viewBox="0 0 22 24"><rect width="19" height="20" rx="3" fill="#7288d8"/><path d="M4 6q5-3 11 0l2 8-4 2-1-2H7l-1 2-4-2z" fill="#fff"/><circle cx="7" cy="10" r="1" fill="#7288d8"/><circle cx="12" cy="10" r="1" fill="#7288d8"/><circle cx="15" cy="17" r="7" fill="#ee5656"/><circle cx="15" cy="17" r="3" fill="#fff"/></svg></button>
        <button class="open current" aria-label="AutoCAD"><svg width="24" height="24" viewBox="0 0 24 24"><path d="M0 0h24v24H0z" fill="#fbe8e0"/><path d="M3 20L9 3h5l7 17h-5l-2-5-5 2-1 3z" fill="url(#red)"/><path d="M9 13l2-7 3 6z" fill="#fbe8e0"/></svg></button>
      </div>
      <div class="tray">
        <button aria-label="People"><svg width="16" height="16" viewBox="0 0 16 16"><g fill="none" stroke="#fff"><circle cx="10.500" cy="3.500" r="3"/><path d="M8 9q1-2 3-2 4 0 4 5"/><circle cx="5" cy="8.500" r="2.500"/><path d="M1 16q0-5 4-5t4 5"/></g></svg></button>
        <button aria-label="Hidden icons"><svg width="12" height="8" viewBox="0 0 12 8"><path d="M1 7l5-5 5 5" fill="none" stroke="#fff" stroke-width="1.500"/></svg></button>
        <button aria-label="Battery"><svg width="16" height="10" viewBox="0 0 16 10"><path d="M.5.5h12v8H.5zM13 2.500h1.500v4H13" fill="none" stroke="#fff"/><path d="M2 2h9v5H2z" fill="#fff"/></svg></button>
        <button aria-label="Volume"><svg width="16" height="14" viewBox="0 0 16 14"><path d="M1 5h2l4-4v12L3 9H1zM9 5q1 2 0 4M11 3q2 4 0 8M14 1q3 6 0 12" fill="none" stroke="#fff"/></svg></button>
        <button aria-label="Network"><svg width="14" height="14" viewBox="0 0 14 14"><g fill="none" stroke="#ddd"><path d="M1 13Q1 3 12 1M4 13q0-7 9-9M7 13q0-4 6-6"/></g><path d="M9 13q0-3 4-4v4z" fill="#fff"/></svg></button>
        <span class="lang">ENG</span>
        <div class="clock"><span>8:44 PM</span><span>19/05/2020</span></div>
        <button class="notify" aria-label="Notifications"><svg width="16" height="16" viewBox="0 0 16 16"><path d="M0 0h15v12H7l-3 4v-4H0z" fill="#fff"/><path d="M3 3.500h9M3 6.500h9M3 9.500h5" stroke="#111"/></svg><span>4</span></button>
      </div>
    </div>
  </div>
</body>
</html>
```
FILE: styles.css
```css
* {
  box-sizing: border-box;
}

body {
  margin: 0;
  background: #222830;
  color: #f2f2f2;
  font-family: 'Open Sans', 'Noto Sans', sans-serif;
  font-size: 12px;
  line-height: 15px;
}

button, input, select {
  margin: 0;
  padding: 0;
  border: 0;
  background: none;
  color: inherit;
  font: inherit;
}

button {
  display: flex;
  align-items: center;
  justify-content: center;
}

a {
  color: inherit;
  text-decoration: none;
}

svg {
  display: block;
  flex: none;
}

.defs {
  position: absolute;
}

.app {
  display: flex;
  flex-direction: column;
  height: 100vh;
  min-height: 500px;
  overflow: hidden;
}

/* small drop-down arrows */
.caret {
  width: 0;
  height: 0;
  flex: none;
  border: 4px solid transparent;
  border-top: 4px solid #fff;
  border-bottom: 0;
}

.caret.small {
  border-width: 3px 3px 0;
}

.caret.dim {
  opacity: 0.5;
}

.caret.side {
  border: 4px solid transparent;
  border-left-color: #fff;
  border-right: 0;
}

/* title bar */
.titlebar {
  position: relative;
  display: flex;
  height: 25px;
  flex: none;
  padding-left: 41px;
  background: #fff;
  border-bottom: 1px solid #333;
}

.app-menu {
  position: absolute;
  left: 0;
  top: 0;
  z-index: 2;
  width: 41px;
  height: 41px;
  border: 1px solid #111;
  background: linear-gradient(#a4a4a4, #636363);
}

.quick-access, .info-center {
  display: flex;
  align-items: center;
  background: linear-gradient(#a2a2a2, #777);
  border-top: 1px solid #555;
}

.quick-access {
  width: 214px;
  gap: 6px;
  padding-left: 8px;
}

.quick-access .caret.small {
  margin: 0 2px;
}

.title {
  display: flex;
  flex: 1;
  justify-content: center;
  align-items: center;
  gap: 12px;
  margin: 0;
  color: #111;
  font-size: 12px;
  font-weight: normal;
  white-space: nowrap;
}

.info-center {
  width: 447px;
  gap: 6px;
}

.expander {
  width: 14px;
  height: 24px;
  margin-right: -6px;
}

.info-center input {
  width: 180px;
  height: 22px;
  padding: 0 3px;
  border: 1px solid #333;
  background: #6e6e6e;
  font-size: 11px;
  font-style: italic;
}

.info-center input::placeholder {
  color: #c4c4c4;
}

.sign-in {
  gap: 4px;
  margin-right: auto;
}

.help {
  width: 17px;
  height: 17px;
  margin-left: 12px;
  border: 1px solid #26304e;
  border-radius: 50%;
  background: #fff;
  color: #1a4fb0;
  font-size: 14px;
  font-weight: bold;
}

.info-center > .caret:last-child {
  margin-right: 4px;
}

.window-buttons {
  display: flex;
  width: 164px;
  padding: 0 2px 0 24px;
}

.window-buttons button {
  width: 46px;
}

/* menus */
.menubar {
  display: flex;
  align-items: center;
  height: 21px;
  flex: none;
  padding-left: 44px;
  background: linear-gradient(#969696, #4e4e4e);
  border-bottom: 1px solid #2e2e2e;
  white-space: nowrap;
}

.menubar a {
  padding: 0 11px;
}

.doc-buttons {
  display: flex;
  gap: 5px;
  margin-left: auto;
  padding-right: 3px;
}

.tabs {
  display: flex;
  align-items: center;
  gap: 1px;
  height: 20px;
  flex: none;
  padding-left: 4px;
  background: #525252;
  border-bottom: 1px solid #333;
  color: #cfcfcf;
  font-size: 11px;
  white-space: nowrap;
}

.tabs a {
  padding: 0 10px;
}

.tabs .active {
  align-self: flex-end;
  height: 19px;
  margin-bottom: -1px;
  border: 1px solid #333;
  border-bottom: 0;
  background: #666;
  color: #fff;
}

.ribbon-toggle {
  margin: 0 6px 0 22px;
}

/* ribbon */
.ribbon {
  display: flex;
  height: 101px;
  flex: none;
  padding: 1px 0 3px 2px;
  background: linear-gradient(#4a4a4a, #343434);
  border-bottom: 1px solid #666;
}

.panel {
  display: flex;
  flex-direction: column;
  flex: none;
  border-right: 1px solid #3a3a3a;
  background: #5c5c5c;
  box-shadow: inset 1px 0 #6c6c6c;
}

.panel h2 {
  display: flex;
  align-items: center;
  justify-content: center;
  gap: 6px;
  position: relative;
  height: 18px;
  margin: 0 1px 0 2px;
  background: #4b4b4b;
  font-size: 12px;
  font-weight: normal;
}

.launcher {
  position: absolute;
  right: 4px;
  bottom: 5px;
}

.section-panel h2 {
  justify-content: flex-start;
  padding-left: 3px;
}

.tools {
  display: flex;
  flex: 1;
  padding: 3px 2px 0;
}

.modeling { width: 132px; }
.mesh { width: 78px; }
.solid { width: 95px; }
.draw { width: 94px; }
.modify { width: 144px; }
.section-panel { width: 77px; }
.coordinates { width: 145px; }
.view { width: 126px; }
.selection { width: 173px; }

.big {
  display: block;
  align-self: flex-start;
  width: 51px;
  padding-top: 2px;
  text-align: center;
}

.big svg {
  margin: 0 auto 4px;
}

.big .caret {
  display: block;
  margin: 3px auto 0;
}

.modeling .tools {
  padding-left: 0;
}

.modeling .big {
  width: 57px;
}

.modeling .big:first-child {
  width: 45px;
}

.mesh .big {
  width: 48px;
}

.section-panel .big {
  width: 72px;
}

.grid {
  display: grid;
  grid-template-columns: 26px;
  grid-auto-rows: 24px;
  align-items: center;
  justify-items: center;
}

.cols-3 {
  grid-template-columns: repeat(3, 26px) 10px;
}

.cols-5 {
  grid-template-columns: repeat(5, 26px) 10px;
}

.with-caret {
  grid-template-columns: 24px 6px;
  margin-right: 9px;
}

.cols-4 {
  grid-template-columns: repeat(4, 25px);
}

.stack {
  display: flex;
  flex-direction: column;
}

.view .stack {
  gap: 3px;
}

.combo {
  position: relative;
  width: 100px;
  height: 21px;
  border: 1px solid #333;
  background: linear-gradient(#555, #6c6c6c);
}

.view .combo {
  width: 122px;
}

.top {
  margin-top: 2px;
}

.combo svg {
  position: absolute;
  left: 3px;
  top: 1px;
}

.combo::after {
  content: '';
  position: absolute;
  right: 3px;
  top: 8px;
  border: 4px solid transparent;
  border-top-color: #fff;
  border-bottom: 0;
  pointer-events: none;
}

.combo select {
  width: 100%;
  height: 19px;
  padding-left: 21px;
  appearance: none;
}

.projection {
  gap: 6px;
  align-self: flex-start;
  margin: 4px 0 0 4px;
}

.selection .big {
  width: 62px;
}

.selection .on {
  width: 44px;
  margin-right: 3px;
  padding: 1px 0 17px;
  border: 1px solid #27406f;
  background: linear-gradient(#86a9de, #4e6a98);
}

.gizmo {
  position: relative;
}

.gizmo .caret {
  position: absolute;
  right: 5px;
  top: 50px;
}

.collapsed {
  display: flex;
  flex-direction: column;
  justify-content: flex-start;
  gap: 4px;
  width: 60px;
  margin-right: 1px;
  padding: 3px 0 4px;
  border: 1px solid #2c2c2c;
  background: linear-gradient(#6b6b6b, #4e4e4e);
}

.collapsed .caret {
  margin-top: auto;
}

/* drawing area */
.viewport {
  position: relative;
  flex: 1;
  min-height: 0;
  background: #222830;
}

.scene {
  width: 100%;
  height: 100%;
}

.view-label {
  position: absolute;
  left: 3px;
  top: 6px;
}

.view-cube {
  position: absolute;
  right: 23px;
  top: 30px;
  display: flex;
  flex-direction: column;
  align-items: center;
  gap: 7px;
}

.compass {
  fill: #a2a3a4;
  font-size: 13px;
  font-weight: bold;
}

.compass.large {
  fill: #b0b1b2;
  font-size: 17px;
}

.faces {
  fill: #444;
  font-size: 7px;
  font-weight: bold;
}

.ucs-name {
  position: relative;
  width: 68px;
  height: 18px;
  border: 1px solid #7b7e8a;
  border-radius: 4px;
  background: #9497a4;
  color: #444854;
  font-size: 11px;
}

.ucs-name select {
  width: 100%;
  height: 16px;
  padding-left: 3px;
  appearance: none;
}

.ucs-name svg {
  position: absolute;
  right: 3px;
  top: 5px;
}

.navbar {
  position: absolute;
  right: 12px;
  top: 170px;
  display: flex;
  flex-direction: column;
  align-items: center;
  gap: 5px;
  width: 32px;
  height: 212px;
  padding: 1px 3px;
  border: 1px solid #72767a;
  border-radius: 3px;
  background: #5b5f62;
}

.navbar button svg {
  fill: none;
  stroke: #3f4348;
}

.navbar .wheel {
  margin-top: 3px;
}

.navbar .dot {
  align-self: flex-end;
}

.navbar .dot:last-child {
  margin-top: auto;
}

.navbar .caret {
  border-top-color: #3c4044;
}

.navbar hr {
  width: 100%;
  margin: 0;
  border: 0;
  border-top: 1px solid #6d7174;
}

.edge {
  position: absolute;
  right: 2px;
  top: 0;
  bottom: 0;
  width: 6px;
  border-right: 1px solid #08a8e8;
  background: linear-gradient(#cddcf2 90px, #b2c8e8 91px);
}

/* layout tabs and status toggles */
.statusbar {
  display: flex;
  justify-content: space-between;
  height: 29px;
  flex: none;
  background: #3a3a3a;
  border-top: 1px solid #555;
}

.layouts {
  display: flex;
  align-items: flex-start;
  gap: 2px;
  padding-left: 11px;
}

.layouts button {
  width: 62px;
  height: 17px;
  background: linear-gradient(#505050, #666);
  clip-path: polygon(0 0, 100% 0, 91% 85%, 87% 100%, 13% 100%, 9% 85%);
  color: #b4b4b4;
}

.layouts .active {
  width: 58px;
  background: linear-gradient(#555, #999);
  color: #fff;
  font-size: 11px;
  font-weight: bold;
}

.layouts .add {
  width: 24px;
  margin-left: 4px;
}

.status {
  display: flex;
  gap: 1px;
  height: 27px;
}

.group {
  display: flex;
  align-items: center;
  justify-content: space-evenly;
  border: 1px solid #777;
  background: #4b4b4b;
}

.model { width: 50px; }
.grid-group { width: 65px; }
.polar-group { width: 104px; }
.snap-group { width: 64px; }
.scale-group { width: 107px; }
.gear-group { width: 40px; }
.one { width: 25px; }
.last { width: 51px; }

.lit {
  color: #2d95ff;
}

.lit svg {
  filter: drop-shadow(0 0 2px #0a5cc0);
}

.scale {
  gap: 6px;
}

.model {
  font-size: 11px;
}

/* windows taskbar */
.taskbar {
  display: flex;
  height: 40px;
  flex: none;
  background: #02040a;
  color: #fff;
}

.launch, .apps, .tray {
  display: flex;
}

.launch button {
  width: 48px;
}

.apps {
  padding-left: 2px;
}

.apps button {
  position: relative;
  width: 49px;
}

.open::after {
  content: '';
  position: absolute;
  left: 5px;
  right: 4px;
  bottom: 0;
  height: 2px;
  background: #76b9ed;
}

.apps .current {
  background: #33373b;
}

.current::after {
  left: 0;
  right: 0;
}

.tray {
  align-items: center;
  gap: 10px;
  margin-left: auto;
  padding-right: 17px;
  font-size: 11px;
}

.tray button:first-child {
  margin-right: 12px;
}

.clock {
  display: flex;
  flex-direction: column;
  align-items: center;
  line-height: 18px;
}

.notify {
  position: relative;
  width: 22px;
  margin-left: 10px;
  justify-content: flex-start;
}

.notify span {
  position: absolute;
  left: 7px;
  top: 5px;
  width: 16px;
  height: 16px;
  border: 1px solid #888;
  border-radius: 50%;
  background: #333;
  line-height: 14px;
}
```
